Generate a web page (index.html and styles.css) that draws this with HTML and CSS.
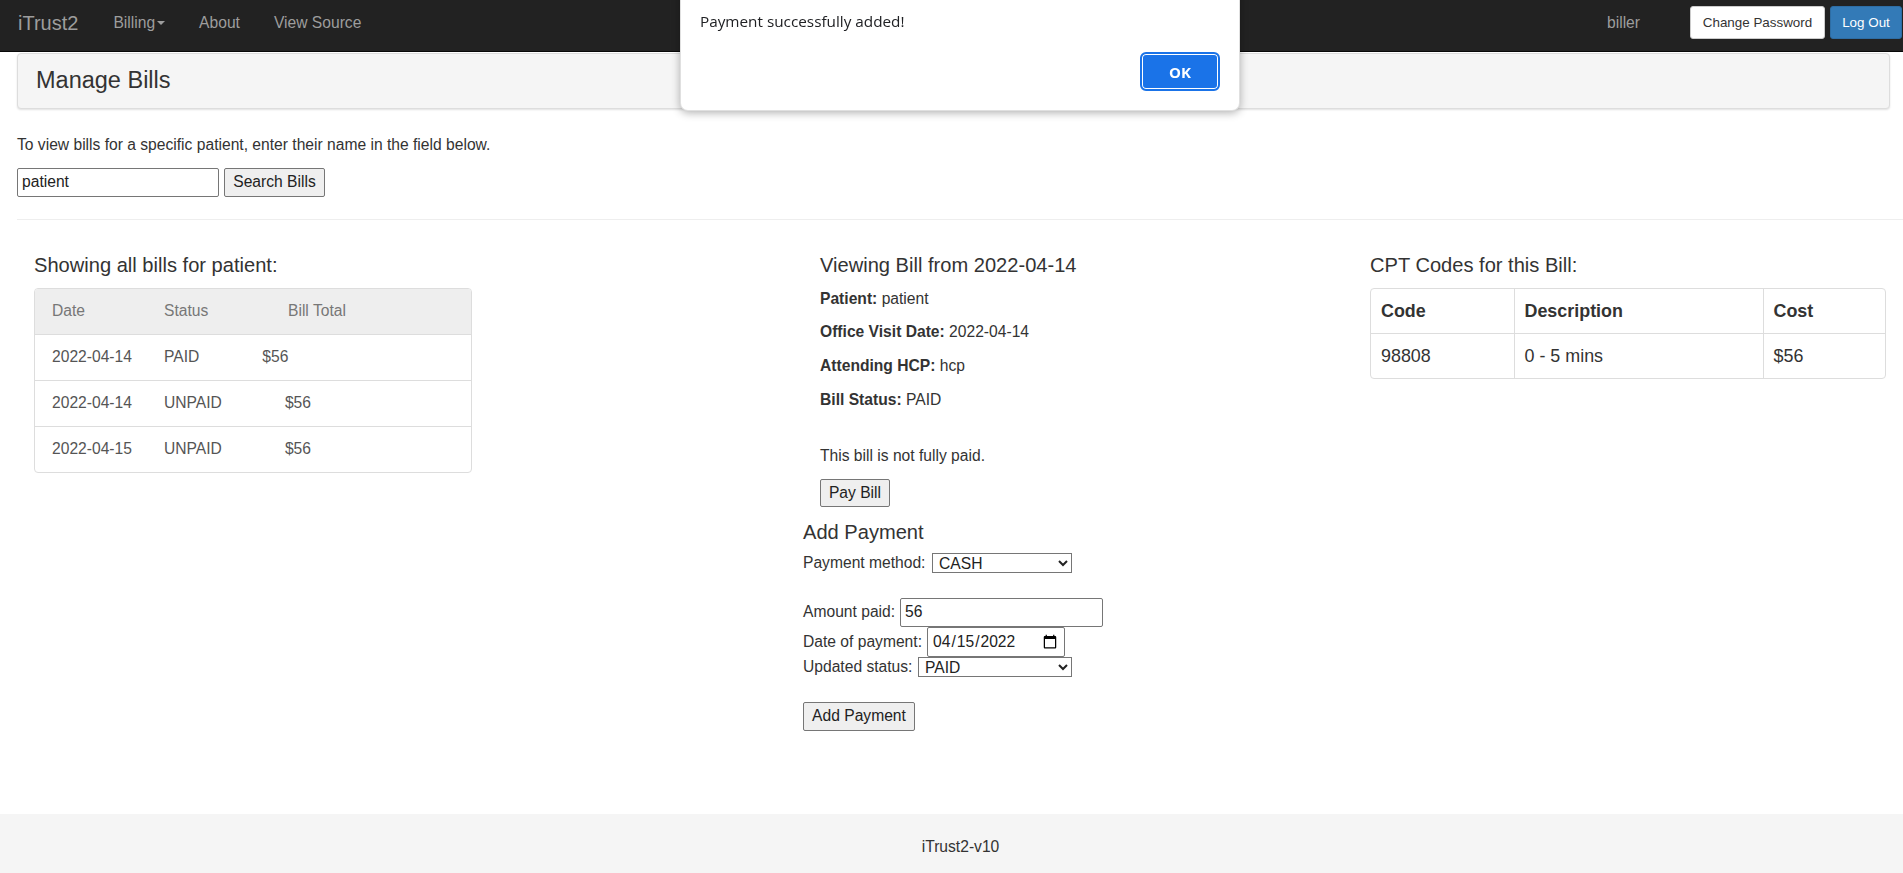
FILE: index.html
```html
<!DOCTYPE html>
<html lang="en">
<head>
<meta charset="utf-8">
<title>iTrust2 - Manage Bills</title>
<link rel="stylesheet" href="styles.css">
</head>
<body>
<nav class="navbar">
  <a class="brand">iTrust2</a>
  <ul class="nav">
    <li>Billing<span class="caret"></span></li>
    <li>About</li>
    <li>View Source</li>
  </ul>
  <div class="nav-right">
    <span class="user">biller</span>
    <button class="btn btn-default">Change Password</button>
    <button class="btn btn-primary">Log Out</button>
  </div>
</nav>

<main class="main">
  <div class="panel"><h3 class="panel-title">Manage Bills</h3></div>
  <p class="intro">To view bills for a specific patient, enter their name in the field below.</p>
  <div class="search">
    <input class="search-input" type="text" value="patient">
    <button class="plain-btn search-btn">Search Bills</button>
  </div>
  <hr class="divider">

  <div class="columns">
    <section class="col">
      <h4 class="heading">Showing all bills for patient:</h4>
      <div class="bill-list">
        <div class="bill-row bill-head">
          <span class="c-date">Date</span><span class="c-status-h">Status</span><span>Bill Total</span>
        </div>
        <div class="bill-row">
          <span class="c-date">2022-04-14</span><span class="c-status">PAID</span><span>$56</span>
        </div>
        <div class="bill-row">
          <span class="c-date">2022-04-14</span><span class="c-status">UNPAID</span><span>$56</span>
        </div>
        <div class="bill-row">
          <span class="c-date">2022-04-15</span><span class="c-status">UNPAID</span><span>$56</span>
        </div>
      </div>
    </section>

    <section class="col">
      <div class="bill-view">
        <h4 class="heading">Viewing Bill from 2022-04-14</h4>
        <p class="field first"><b>Patient:</b> patient</p>
        <p class="field"><b>Office Visit Date:</b> 2022-04-14</p>
        <p class="field"><b>Attending HCP:</b> hcp</p>
        <p class="field last"><b>Bill Status:</b> PAID</p>
        <p class="field notice">This bill is not fully paid.</p>
        <button class="plain-btn pay-btn">Pay Bill</button>
      </div>
      <div class="add-payment">
        <h4 class="heading ap-heading">Add Payment</h4>
        <div class="form-row r1">
          <label class="lbl-method">Payment method:</label>
          <select class="sel sel-method"><option>CASH</option></select>
        </div>
        <div class="form-row r2">
          <label class="lbl-amount">Amount paid:</label>
          <input class="txt amount" type="text" value="56">
        </div>
        <div class="form-row r3">
          <label class="lbl-date">Date of payment:</label>
          <input class="txt date" type="date" value="2022-04-15">
        </div>
        <div class="form-row r4">
          <label class="lbl-status">Updated status:</label>
          <select class="sel sel-status"><option>PAID</option></select>
        </div>
        <button class="plain-btn add-btn">Add Payment</button>
      </div>
    </section>

    <section class="col">
      <h4 class="heading">CPT Codes for this Bill:</h4>
      <div class="cpt-wrap">
        <table class="cpt">
          <colgroup><col class="w1"><col class="w2"><col class="w3"></colgroup>
          <thead>
            <tr><th>Code</th><th>Description</th><th>Cost</th></tr>
          </thead>
          <tbody>
            <tr><td>98808</td><td>0 - 5 mins</td><td>$56</td></tr>
          </tbody>
        </table>
      </div>
    </section>
  </div>
</main>

<footer class="footer">iTrust2-v10</footer>

<div class="dialog">
  <p class="dialog-msg">Payment successfully added!</p>
  <button class="dialog-ok">OK</button>
</div>
</body>
</html>
```

FILE: styles.css
```css
html, body {
  margin: 0;
  padding: 0;
}

body {
  font-family: "Liberation Sans", Arial, sans-serif;
  font-size: 15.64px;
  line-height: 20px;
  color: #333;
  background: #fff;
  min-height: 100vh;
  display: flex;
  flex-direction: column;
}

/* ---------- navbar ---------- */
.navbar {
  height: 52px;
  box-sizing: border-box;
  background: #222;
  border-bottom: 1px solid #080808;
  display: flex;
  align-items: center;
  padding-bottom: 6px;
}

.brand {
  font-size: 20px;
  line-height: 22px;
  color: #9d9d9d;
  padding-left: 18px;
  margin-right: 35px;
}

.nav {
  display: flex;
  gap: 34px;
  list-style: none;
  margin: 0;
  padding: 0;
  color: #9d9d9d;
}

.caret {
  display: inline-block;
  width: 0;
  height: 0;
  border-top: 4.4px solid #9d9d9d;
  border-left: 4.4px solid transparent;
  border-right: 4.4px solid transparent;
  vertical-align: middle;
  margin-left: 2px;
}

.nav-right {
  margin-left: auto;
  display: flex;
  align-items: center;
  padding-right: 1px;
}

.user {
  color: #9d9d9d;
  margin-right: 50px;
}

.btn {
  font-family: "Liberation Sans", Arial, sans-serif;
  font-size: 13.4px;
  height: 33px;
  box-sizing: border-box;
  border-radius: 3px;
  border: 1px solid;
  padding: 0;
  text-align: center;
}

.btn-default {
  width: 135px;
  background: #fff;
  border-color: #ccc;
  color: #333;
}

.btn-primary {
  width: 72px;
  margin-left: 5px;
  background: #337ab7;
  border-color: #2e6da4;
  color: #fff;
}

/* ---------- main ---------- */
.main {
  flex: 1;
}

.panel {
  margin: 1px 13px 0 17px;
  height: 56px;
  box-sizing: border-box;
  border: 1px solid #ddd;
  border-radius: 4px;
  background: #f5f5f5;
  padding: 13px 18px 0;
  box-shadow: 0 1px 2px rgba(0, 0, 0, 0.12);
}

.panel-title {
  margin: 0;
  font-size: 23.5px;
  line-height: 26px;
  font-weight: 400;
}

.intro {
  margin: 25.7px 0 0 17px;
}

.search {
  margin: 13.3px 0 0 17px;
  display: flex;
  gap: 5px;
  height: 29px;
}

.search-input {
  width: 202px;
  height: 29px;
  box-sizing: border-box;
  border: 1px solid #767676;
  border-radius: 2px;
  padding: 1px 4px;
  font-family: "Liberation Sans", Arial, sans-serif;
  font-size: 15.64px;
  color: #222;
}

.plain-btn {
  font-family: "Liberation Sans", Arial, sans-serif;
  font-size: 15.64px;
  color: #222;
  background: #efefef;
  border: 1px solid #767676;
  border-radius: 2px;
  box-sizing: border-box;
  padding: 0;
}

.search-btn {
  width: 101px;
  height: 29px;
}

.divider {
  margin: 22px 0 0 17px;
  border: 0;
  border-top: 1px solid #eee;
  height: 0;
}

.columns {
  display: grid;
  grid-template-columns: 769px 567px 516px;
  padding-left: 34px;
  margin-top: 34px;
}

.heading {
  margin: 0;
  font-size: 20.1px;
  line-height: 22px;
  font-weight: 400;
  color: #333;
}

/* bills list */
.bill-list {
  margin-top: 12px;
  width: 438px;
  box-sizing: border-box;
  border: 1px solid #ddd;
  border-radius: 4px;
  overflow: hidden;
}

.bill-row {
  display: flex;
  align-items: center;
  height: 45px;
  padding-left: 17px;
  border-top: 1px solid #ddd;
  color: #555;
}

.bill-head {
  border-top: 0;
  background: #eee;
  color: #777;
}

.c-date {
  width: 112px;
  flex: none;
}

.c-status-h {
  width: 124px;
  flex: none;
}

.c-status {
  margin-right: 63px;
}

/* bill view */
.bill-view {
  padding-left: 17px;
}

.field {
  margin: 0 0 13.67px;
}

.field.first {
  margin-top: 12.7px;
}

.field.last {
  margin-bottom: 36px;
}

.field.notice {
  margin-bottom: 0;
}

.pay-btn {
  display: block;
  margin-top: 13.3px;
  width: 70px;
  height: 28px;
}

.ap-heading {
  margin-top: 14.1px;
}

.form-row {
  display: flex;
  align-items: center;
}

.form-row label {
  flex: none;
  white-space: nowrap;
}

.lbl-method { width: 129px; }
.lbl-amount { width: 97px; }
.lbl-date { width: 124px; }
.lbl-status { width: 115px; }

.r1 { margin-top: 9.9px; height: 20px; }
.r2 { margin-top: 25px; height: 29px; }
.r3 { height: 30px; }
.r4 { height: 20px; }

.sel {
  font-family: "Liberation Sans", Arial, sans-serif;
  font-size: 15.64px;
  height: 20px;
  box-sizing: border-box;
  padding: 0 0 0 2px;
  border: 1px solid #767676;
  border-radius: 0;
  color: #222;
  background: #fff;
}

.sel-method { width: 140px; }
.sel-status { width: 154px; }

.txt {
  font-family: "Liberation Sans", Arial, sans-serif;
  font-size: 15.64px;
  box-sizing: border-box;
  border: 1px solid #767676;
  border-radius: 2px;
  color: #222;
  background: #fff;
  margin: 0;
}

.amount {
  width: 203px;
  height: 29px;
  padding: 1px 4px;
}

.date {
  width: 138px;
  height: 30px;
  padding: 1px 4px;
}

.add-btn {
  display: block;
  margin-top: 25px;
  width: 112px;
  height: 29px;
}

/* CPT table */
.cpt-wrap {
  margin-top: 12px;
  border: 1px solid #ddd;
  border-radius: 4px;
  overflow: hidden;
  width: 516px;
  box-sizing: border-box;
}

.cpt {
  width: 100%;
  border-collapse: collapse;
  font-size: 17.9px;
  color: #333;
}

.cpt .w1 { width: 143px; }
.cpt .w2 { width: 249px; }

.cpt th,
.cpt td {
  height: 44px;
  padding: 0 10px;
  text-align: left;
  border-left: 1px solid #ddd;
}

.cpt th:first-child,
.cpt td:first-child {
  border-left: 0;
}

.cpt th {
  font-weight: 700;
}

.cpt td {
  border-top: 1px solid #ddd;
}

/* footer */
.footer {
  height: 59px;
  box-sizing: border-box;
  background: #f5f5f5;
  text-align: center;
  padding: 23px 0 0 18px;
  color: #333;
}

/* alert dialog overlay */
.dialog {
  position: fixed;
  left: 680px;
  top: -20px;
  width: 560px;
  height: 131px;
  box-sizing: border-box;
  background: #fff;
  border: 1px solid rgba(0, 0, 0, 0.12);
  border-radius: 8px;
  box-shadow: 0 2px 8px rgba(0, 0, 0, 0.3);
  padding: 30px 19px 19px 19px;
  display: flex;
  flex-direction: column;
  font-family: "Open Sans", "Noto Sans", sans-serif;
}

.dialog-msg {
  margin: 0;
  font-size: 15.3px;
  line-height: 20px;
  color: #202124;
}

.dialog-ok {
  margin-top: auto;
  align-self: flex-end;
  width: 80px;
  height: 39px;
  box-sizing: border-box;
  background: #1a73e8;
  border: 2px solid #1a73e8;
  box-shadow: inset 0 0 0 1px #fff;
  border-radius: 6px;
  color: #fff;
  font-family: "Open Sans", "Noto Sans", sans-serif;
  font-size: 15px;
  font-weight: 700;
}
```
